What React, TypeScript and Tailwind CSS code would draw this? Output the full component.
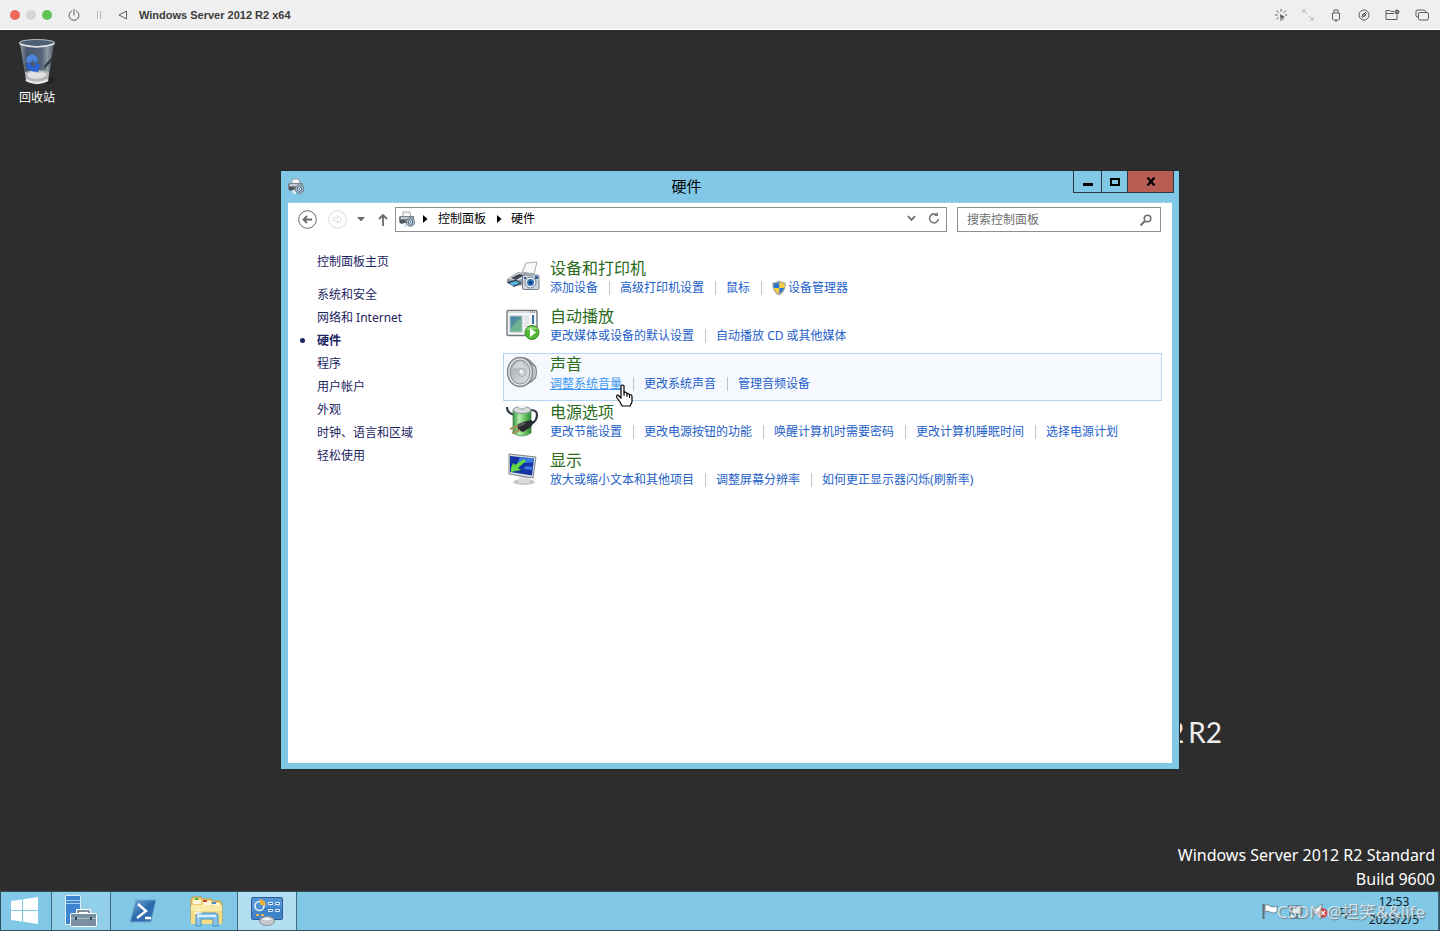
import type { ReactNode } from 'react';

type Category = {
  title: string;
  icon: ReactNode;
  links: { label: string; shield?: boolean }[];
};

function RecycleBinIcon() {
  return (
    <svg width="40" height="48" viewBox="0 0 40 48" aria-hidden="true">
      <defs>
        <linearGradient id="bin" x1="0" x2="1">
          <stop offset="0" stopColor="#8b97a3" />
          <stop offset="0.2" stopColor="#46566a" />
          <stop offset="0.65" stopColor="#56657a" />
          <stop offset="0.8" stopColor="#8f99a3" />
          <stop offset="1" stopColor="#525c66" />
        </linearGradient>
      </defs>
      <ellipse cx="29" cy="42" rx="9" ry="4" fill="#1b1b1b" opacity="0.6" />
      <path d="M3 5 9 43q11 5 22 0L37 5z" fill="url(#bin)" />
      <path d="M8 34q12-4 24 0l-1 9q-11 5-22 0z" fill="#b4b7ba" />
      <path d="m10 36 5-3 5 2 6-1 4 3-5 3-8 1-6-2z" fill="#e2e2e2" />
      <path d="m10 19 5-3 4 2 2 4-3 3-2-3-3 3-4-1z" fill="#4b83e0" />
      <path d="m9 26 4-1 2 4 2-1v6l-6-3zM18 24l5 3-2 7-5-1 2-4z" fill="#2962d6" />
      <path d="m27 28 8-9v4l-8 8z" fill="#313b45" />
      <ellipse cx="20" cy="5" rx="17.500" ry="3.500" fill="#4d6074" stroke="#aeb4b9" strokeWidth="1.200" />
      <path d="M3 6q16 6 34 0" fill="none" stroke="#e4e4e4" strokeWidth="1.500" />
      <path d="M9 42q11 6 22 0" fill="none" stroke="#e6e6e6" strokeWidth="2.500" />
    </svg>
  );
}

function HardwareIcon() {
  return (
    <svg width="16" height="16" viewBox="0 0 16 16" aria-hidden="true">
      <path d="M4 1h7l1 5H4z" fill="#f7f7f7" stroke="#8a8f94" strokeWidth="0.800" />
      <path d="M1 5h14v8H2L0 11V6z" fill="#7b838b" />
      <path d="M2 6h12v2H2z" fill="#c5cbd0" />
      <path d="M1 9h5v3H1z" fill="#4b535b" />
      <path d="M4 12h4v4H5z" fill="#dbe9f4" />
      <circle cx="11.500" cy="11" r="4.300" fill="#aebecb" stroke="#5b6670" strokeWidth="0.800" />
      <circle cx="11.500" cy="11" r="2.300" fill="#eef6fb" stroke="#3c6288" />
      <circle cx="11.500" cy="11" r="0.800" fill="#234c78" />
    </svg>
  );
}

function PrinterIcon() {
  return (
    <svg width="34" height="32" viewBox="0 0 34 32" aria-hidden="true">
      <path d="m20 3 11-1-3 12-12-2z" fill="#fafafa" stroke="#8e949b" strokeWidth="0.800" />
      <path d="m20 4-3 7" stroke="#c8cdd2" />
      <path d="m1 19 11-7 14 2-4 11-14 1-7-3z" fill="#929aa3" />
      <path d="m2 19 10-6 13 2-12 5z" fill="#dde2e7" />
      <path d="m5 18 8-4 6 1-9 5z" fill="#3d4650" />
      <path d="m1 22 9-2 6 3-8 4z" fill="#20384e" />
      <path d="m3 23 7-2 4 2-7 3z" fill="#5bb6dc" />
      <rect x="16.500" y="15" width="16.500" height="14.500" rx="1.500" fill="#cfd6de" stroke="#76808b" />
      <path d="M20 13h8v3h-8z" fill="#a1a9b2" />
      <circle cx="24.500" cy="22.500" r="5.500" fill="#eef2f6" stroke="#6d7885" />
      <circle cx="24.500" cy="22.500" r="3.500" fill="#2d70be" />
      <circle cx="24.500" cy="22.500" r="1.600" fill="#153764" />
      <path d="M29 16h3v3h-3zM18 17h2v2h-2z" fill="#2b5c9d" />
    </svg>
  );
}

function AutoplayIcon() {
  return (
    <svg width="34" height="32" viewBox="0 0 34 32" aria-hidden="true">
      <defs>
        <linearGradient id="photo" x1="0" y1="0" x2="0.500" y2="1">
          <stop offset="0" stopColor="#3f79ab" />
          <stop offset="1" stopColor="#65b084" />
        </linearGradient>
      </defs>
      <rect x="1" y="2.500" width="30" height="25" rx="1.500" fill="#f4f5f6" stroke="#73777b" strokeWidth="1.400" />
      <path d="M2 3h28v2H2z" fill="#dadde0" />
      <path d="M24 4h1m1 0h1m1 0h1" stroke="#555555" />
      <rect x="4" y="8" width="12" height="16" fill="url(#photo)" stroke="#b8c1c9" />
      <path d="M5 21q5-8 10-11v13H5z" fill="#78be92" opacity="0.600" />
      <path d="M18 9h5m-5 3h5m-5 3h5m-5 3h4" stroke="#c4c8cc" />
      <path d="M26 7h2v9h-2z" fill="#3a71a9" />
      <circle cx="26" cy="24.500" r="7" fill="#55b637" stroke="#369221" />
      <path d="M20 22q5-6 12-1-6 1-12 1z" fill="#96d97e" />
      <path d="m24 20 6 4.500-6 4.500z" fill="#ffffff" />
    </svg>
  );
}

function SpeakerIcon() {
  return (
    <svg width="34" height="34" viewBox="0 0 34 34" aria-hidden="true">
      <defs>
        <linearGradient id="cone" x1="0" y1="0" x2="1" y2="1">
          <stop offset="0" stopColor="#9da1a6" />
          <stop offset="0.500" stopColor="#c4c7ca" />
          <stop offset="1" stopColor="#e4e5e7" />
        </linearGradient>
      </defs>
      <path d="M15 1q7 0 11 5l4 4q2 6 0 12l-4 4-9 5z" fill="#85898e" />
      <path d="m25 8 4 3q2 5 0 10l-4 4z" fill="#c1c4c8" />
      <ellipse cx="14" cy="16" rx="12.500" ry="14.500" fill="#e3e4e6" stroke="#85898e" strokeWidth="1.400" />
      <ellipse cx="14" cy="16" rx="10" ry="12" fill="url(#cone)" stroke="#888d92" />
      <path d="M6 13q3-8 10-8l3 7q-6-1-13 1z" fill="#f0f0f1" opacity="0.500" />
      <ellipse cx="16" cy="16.500" rx="3.500" ry="4" fill="#d4d6d9" stroke="#979ba0" strokeWidth="0.700" />
      <ellipse cx="15" cy="15.500" rx="1.500" ry="1.800" fill="#f7f7f8" />
    </svg>
  );
}

function PowerIcon() {
  return (
    <svg width="34" height="34" viewBox="0 0 34 34" aria-hidden="true">
      <defs>
        <linearGradient id="cell" x1="0" x2="1">
          <stop offset="0" stopColor="#36943e" />
          <stop offset="0.350" stopColor="#b4edac" />
          <stop offset="0.700" stopColor="#65bf5c" />
          <stop offset="1" stopColor="#2d8438" />
        </linearGradient>
      </defs>
      <path d="M8 11Q1 9 1 3M25 6q6 0 6 5 0 6-6 9" fill="none" stroke="#343d4b" strokeWidth="2.200" />
      <path d="M7 6v23q9 6 18 0V6z" fill="url(#cell)" stroke="#448047" strokeWidth="0.700" />
      <ellipse cx="16" cy="6" rx="9" ry="3.500" fill="#d6dddb" stroke="#88928e" />
      <path d="M12.500 2h7v3q-4 2-7 0z" fill="#b6bfbc" />
      <ellipse cx="16" cy="2.500" rx="3.500" ry="1.500" fill="#f4f6f5" />
      <path d="m11 21 6-3 8-2 3 2-3 5-8 5-5-2z" fill="#292b2e" />
      <path d="m12 20 6-2 2 2-7 3z" fill="#55585c" />
      <path d="m12 22-8 3m10 1-8 3" stroke="#a98e55" strokeWidth="2" />
    </svg>
  );
}

function DisplayIcon() {
  return (
    <svg width="34" height="34" viewBox="0 0 34 34" aria-hidden="true">
      <ellipse cx="18" cy="30" rx="11" ry="3" fill="#c3c5c8" />
      <path d="m14 23 8 1 2 6q-6 3-12 0z" fill="#d9dbdd" />
      <path d="m3 2 27 3-3 21-24-4z" fill="#dcdfe2" stroke="#7c838a" />
      <path d="m4 4 24 2.500-2 17L4 20z" fill="#1233a0" />
      <path d="m14 5 14 1.500-1 4-16 1zM20 14l7 1-1 3-9-1z" fill="#3b78df" />
      <path d="m5 16 2-5 2 2 9-6 2 2-8 7 3 2-10 2z" fill="#64d747" />
    </svg>
  );
}

function ShieldIcon() {
  return (
    <svg width="14" height="16" viewBox="0 0 15 16" className="mr-0.5" aria-hidden="true">
      <path d="M7.500 0q3 2 7 2 1 10-7 14Q-.5 12 .5 2q4 0 7-2z" fill="#aaa99b" />
      <path d="M7.500 2v6H2q-.5-2 0-5 3 0 5.500-1zM8 8h5q-1 4-5 6z" fill="#2e78cc" />
      <path d="M8 2q2 1 5 1 1 2 0 5H8zM2 8h5.500v6Q3 12 2 8z" fill="#f6cf3d" />
    </svg>
  );
}

function HandCursor() {
  return (
    <svg width="17" height="24" viewBox="0 0 17 24" className="absolute left-[66px] top-2.5 z-10" aria-hidden="true">
      <path
        d="M5 2q0-1 1.500-1T8 2v7l1-1q2 0 2 2 2-1 2.500 1 2.500-1 2.500 2v5l-2 4H6l-2-4-3-4q-1-3 1-3l3 3z"
        fill="#ffffff"
        stroke="#000000"
        strokeWidth="1.200"
        strokeLinejoin="round"
      />
      <path d="M8 9v3m3-2v3m2.500-2v3" stroke="#000000" />
    </svg>
  );
}

const sidebar = ['系统和安全', '网络和 Internet', '硬件', '程序', '用户帐户', '外观', '时钟、语言和区域', '轻松使用'];

const categories: Category[] = [
  {
    title: '设备和打印机',
    icon: <PrinterIcon />,
    links: [{ label: '添加设备' }, { label: '高级打印机设置' }, { label: '鼠标' }, { label: '设备管理器', shield: true }],
  },
  {
    title: '自动播放',
    icon: <AutoplayIcon />,
    links: [{ label: '更改媒体或设备的默认设置' }, { label: '自动播放 CD 或其他媒体' }],
  },
  {
    title: '声音',
    icon: <SpeakerIcon />,
    links: [{ label: '调整系统音量' }, { label: '更改系统声音' }, { label: '管理音频设备' }],
  },
  {
    title: '电源选项',
    icon: <PowerIcon />,
    links: [
      { label: '更改节能设置' },
      { label: '更改电源按钮的功能' },
      { label: '唤醒计算机时需要密码' },
      { label: '更改计算机睡眠时间' },
      { label: '选择电源计划' },
    ],
  },
  {
    title: '显示',
    icon: <DisplayIcon />,
    links: [{ label: '放大或缩小文本和其他项目' }, { label: '调整屏幕分辨率' }, { label: '如何更正显示器闪烁(刷新率)' }],
  },
];

function HostBar() {
  return (
    <header className="flex h-[30px] shrink-0 items-center border-b border-white bg-[#efefef] pl-2.5 pr-[11px] pt-px text-[#5c5c5c]">
      <div className="flex gap-1.5">
        <button aria-label="Close" className="size-2.5 rounded-full bg-[#ee6a5f]" />
        <button aria-label="Minimize" className="size-2.5 rounded-full bg-[#d5d5d5]" />
        <button aria-label="Zoom" className="size-2.5 rounded-full bg-[#5fc454]" />
      </div>
      <button aria-label="Power" className="ml-4">
        <svg width="12" height="12" viewBox="0 0 12 12" fill="none" stroke="currentColor" strokeLinecap="round">
          <path d="M3.500 2a5 5 0 1 0 5 0M6 .5V6" />
        </svg>
      </button>
      <button aria-label="Pause" className="ml-3.5 text-[#b9b9b9]">
        <svg width="10" height="10" viewBox="0 0 10 10" stroke="currentColor">
          <path d="M3.500 1v8M6.500 1v8" />
        </svg>
      </button>
      <button aria-label="Back" className="ml-3.5">
        <svg width="10" height="10" viewBox="0 0 10 10" fill="none" stroke="currentColor" strokeLinejoin="round">
          <path d="M8.500 1v8L1 5z" />
        </svg>
      </button>
      <h1 className="ml-[11px] flex-1 text-[11px] font-bold text-[#3b3b3b] font-['Liberation_Sans',sans-serif]">
        Windows Server 2012 R2 x64
      </h1>
      <div className="flex items-center gap-[15px]">
        <button aria-label="Grab cursor">
          <svg width="12" height="12" viewBox="0 0 12 12" fill="none" stroke="currentColor">
            <path d="M6 0v2.500M6 9.500V12M0 6h2.500M10 6h2M1.500 2l2 1.500M10.500 2l-2 1.500M1.500 10l2-1.500" />
            <path d="m5 5 5 3-2 .5 1 2-1 .5-1-2-1.500 1z" fill="currentColor" stroke="none" />
          </svg>
        </button>
        <button aria-label="Resize" className="text-[#b5b5b5]">
          <svg width="12" height="12" viewBox="0 0 12 12" fill="none" stroke="currentColor">
            <path d="m1 1 4 4M1 4V1h3M7 7l4 4M11 8v3H8" />
          </svg>
        </button>
        <button aria-label="USB" className="flex w-3.5 justify-center">
          <svg width="10" height="13" viewBox="0 0 10 13" fill="none" stroke="currentColor">
            <path d="M3 4V1h4v3M1.500 4h7v6l-1 1h-5l-1-1zM5 11v2" />
          </svg>
        </button>
        <button aria-label="Disc">
          <svg width="12" height="12" viewBox="0 0 12 12" fill="none" stroke="currentColor">
            <circle cx="6" cy="6" r="5" />
            <circle cx="6" cy="6" r="1.500" />
            <path d="m3 8 5-5M4 9l5-5" />
          </svg>
        </button>
        <button aria-label="Shared folder">
          <svg width="15" height="12" viewBox="0 0 15 12" fill="none" stroke="currentColor">
            <path d="M9 2.500H6L5 1.500H1v9h11V6M1 4.500h8" />
            <circle cx="12" cy="3" r="2" fill="currentColor" />
            <path d="M12 2v2" stroke="#efefef" strokeWidth="0.700" />
          </svg>
        </button>
        <button aria-label="Windows">
          <svg width="14" height="12" viewBox="0 0 14 12" fill="none" stroke="currentColor">
            <rect x="3.500" y="3.500" width="10" height="7.500" rx="1.500" />
            <path d="M3.500 8H2L1 7V2l1-1h7.500l1 1v1.500" />
          </svg>
        </button>
      </div>
    </header>
  );
}

function AddressBar() {
  return (
    <div className="flex h-[33px] items-center pl-[10px] pr-[11px] text-[#6b6b6b]">
      <button aria-label="后退">
        <svg width="19" height="19" viewBox="0 0 19 19" fill="none" stroke="#6a6a6a">
          <circle cx="9.500" cy="9.500" r="8.800" />
          <path d="M14 9.500H5.500M9 6 5.500 9.500 9 13" strokeWidth="1.800" />
        </svg>
      </button>
      <button aria-label="前进" className="ml-[11px]">
        <svg width="19" height="19" viewBox="0 0 19 19" fill="none" stroke="#d9d9d9">
          <circle cx="9.500" cy="9.500" r="8.800" />
          <path d="M5 8h4.500V5.500l4.500 4-4.500 4V11H5z" />
        </svg>
      </button>
      <button aria-label="最近的位置" className="ml-2.5">
        <svg width="8" height="5" viewBox="0 0 8 5">
          <path d="M0 0h8L4 4.500z" fill="#6b6b6b" />
        </svg>
      </button>
      <button aria-label="向上" className="ml-3">
        <svg width="12" height="13" viewBox="0 0 12 13" fill="none" stroke="#6b6b6b" strokeWidth="1.800">
          <path d="M6 13V2M2 6l4-4 4 4" />
        </svg>
      </button>
      <nav className="ml-[6px] flex h-[25px] flex-1 items-center border border-[#8f8f8f] bg-white pb-0.5 pl-[3px] pr-1.5 text-[12px] text-black">
        <HardwareIcon />
        <svg width="5" height="8" viewBox="0 0 5 8" className="ml-2" aria-hidden="true">
          <path d="m0 0 4.500 4L0 8z" />
        </svg>
        <a href="#home" className="ml-2.5">控制面板</a>
        <svg width="5" height="8" viewBox="0 0 5 8" className="ml-[11px]" aria-hidden="true">
          <path d="m0 0 4.500 4L0 8z" />
        </svg>
        <a href="#hardware" className="ml-[9px] flex-1">硬件</a>
        <button aria-label="展开">
          <svg width="9" height="7" viewBox="0 0 9 7" fill="none" stroke="#666666" strokeWidth="1.800">
            <path d="m1 1 3.500 4L8 1" />
          </svg>
        </button>
        <button aria-label="刷新" className="ml-3">
          <svg width="12" height="13" viewBox="0 0 12 13" fill="none" stroke="#777777" strokeWidth="1.600">
            <path d="M9.500 3.500A4.500 4.500 0 1 0 10.500 7" />
            <path d="M6 4h4V0z" fill="#777777" stroke="none" />
          </svg>
        </button>
      </nav>
      <label className="ml-2.5 flex h-[25px] w-[204px] items-center border border-[#8f8f8f] bg-white pl-[9px] pr-2">
        <input
          type="search"
          aria-label="搜索控制面板"
          placeholder="搜索控制面板"
          className="min-w-0 flex-1 bg-transparent text-[12px] outline-none placeholder:text-[#6f6f6f]"
        />
        <svg width="12" height="12" viewBox="0 0 12 12" fill="none" stroke="#707070" strokeWidth="1.600" aria-hidden="true">
          <circle cx="7.500" cy="4.500" r="3.300" />
          <path d="m5 7-4.500 4.500" strokeWidth="2" />
        </svg>
      </label>
    </div>
  );
}

function ControlPanelWindow() {
  return (
    <section className="absolute left-[281px] top-[141px] flex h-[598px] w-[898px] flex-col bg-[#81c7e6] px-[7px] pb-[6px] shadow-[0_0_0_1px_#252a2d]">
      <div className="flex h-[31px] shrink-0">
        <div className="pt-[7px]">
          <HardwareIcon />
        </div>
        <h2 className="flex-1 pr-1 text-center text-[15px] leading-[30px] text-black">硬件</h2>
        <div className="-mr-0.5 flex h-[22px] border border-t-0 border-[#2b3a42]">
          <button aria-label="最小化" className="flex w-7 items-center justify-center border-r border-[#2b3a42]">
            <span className="mt-1.5 h-[3px] w-2.5 bg-black" />
          </button>
          <button aria-label="最大化" className="flex w-[26px] items-center justify-center border-r border-[#2b3a42]">
            <span className="h-2 w-2.5 border-2 border-black" />
          </button>
          <button aria-label="关闭" className="flex w-[45px] items-center justify-center bg-[#b75d52]">
            <svg width="10" height="9" viewBox="0 0 10 9" stroke="#000000" strokeWidth="2.200">
              <path d="m1.500.5 7 8M8.500.5l-7 8" />
            </svg>
          </button>
        </div>
      </div>
      <div className="flex-1 border-t border-[#a3cfe2] bg-white">
        <AddressBar />
        <div className="flex">
          <aside className="w-[215px] shrink-0 pl-[29px] pt-3.5 text-[12px] text-[#1b2462]">
            <a href="#home" className="block leading-[23px]">控制面板主页</a>
            <ul className="mt-2.5">
              {sidebar.map((item) => (
                <li key={item} className="relative leading-[23px]">
                  {item === '硬件' && <span className="absolute -left-[17px] top-[9px] size-[5px] rounded-full bg-[#1b2462]" />}
                  <a href="#category" className={item === '硬件' ? 'font-bold' : ''}>{item}</a>
                </li>
              ))}
            </ul>
          </aside>
          <main className="flex-1 pr-2.5 pt-[21px]">
            {categories.map((category) => (
              <article
                key={category.title}
                className={
                  category.title === '声音'
                    ? 'flex h-12 border border-[#b4d3f2] bg-[#f5f9fe] pl-0.5'
                    : 'flex h-12 border border-transparent pl-0.5'
                }
              >
                <div className="w-11 shrink-0 pt-0.5">{category.icon}</div>
                <div>
                  <h3 className="text-[16px] leading-5 text-[#2a6b1c]">
                    <a href="#open">{category.title}</a>
                  </h3>
                  <div className="relative flex items-center text-[12px] leading-5 text-[#2460c8]">
                    {category.links.map((link, i) => (
                      <div key={link.label} className="flex items-center">
                        {i > 0 && <span className="ml-[11px] mr-2.5 h-3.5 w-px bg-[#c4c4c4]" />}
                        {link.shield && <ShieldIcon />}
                        <a href="#task" className={link.label === '调整系统音量' ? 'text-[#3d96f2] underline' : ''}>
                          {link.label}
                        </a>
                      </div>
                    ))}
                    {category.title === '声音' && <HandCursor />}
                  </div>
                </div>
              </article>
            ))}
          </main>
        </div>
      </div>
    </section>
  );
}

function Taskbar() {
  return (
    <footer className="flex h-10 shrink-0 border border-[#34515e] bg-[#81c7e6]">
      <button aria-label="开始" className="flex w-[50px] items-center justify-center pr-1">
        <svg width="28" height="28" viewBox="0 0 28 28" fill="#ffffff" aria-hidden="true">
          <path d="m1 4 11-1.500V13H1zM13 2.300 28 0v13H13zM1 14h11v10.500L1 23zM13 14h15v13l-15-2.300z" />
        </svg>
      </button>
      <button aria-label="服务器管理器" className="flex w-[60px] items-center justify-center border-x border-[#3d6b80] bg-[#92d0ea]">
        <svg width="34" height="34" viewBox="0 0 34 34" aria-hidden="true">
          <path d="M1.500 1.500h15v29h-15z" fill="#3e85d1" stroke="#d9eefa" />
          <path d="M2 6.500h14M2 9.500h14" stroke="#a9d0f0" />
          <path d="M14 20v-3h11v3" fill="none" stroke="#ffffff" strokeWidth="4" />
          <rect x="6.500" y="19.500" width="26" height="13" rx="1" fill="#78909f" stroke="#ffffff" />
          <path d="M14 19v-2h11v2" fill="none" stroke="#566f80" strokeWidth="1.500" />
          <path d="M7 24.500h25" stroke="#a9bac5" />
          <path d="M12 23v3M27 23v3" stroke="#33495a" strokeWidth="2" />
        </svg>
      </button>
      <button aria-label="PowerShell" className="flex w-[63px] items-center justify-center">
        <svg width="28" height="26" viewBox="0 0 28 26" aria-hidden="true">
          <defs>
            <linearGradient id="shell" x1="0" x2="1" y1="0" y2="1">
              <stop offset="0" stopColor="#73b0de" />
              <stop offset="0.500" stopColor="#2b69ab" />
              <stop offset="1" stopColor="#397dbd" />
            </linearGradient>
          </defs>
          <path d="M7 2h20l-5 22H1z" fill="url(#shell)" stroke="#74a7cd" strokeLinejoin="round" />
          <path d="m9 6 8 7-9 7M16 20h6" fill="none" stroke="#ffffff" strokeWidth="2.400" />
        </svg>
      </button>
      <button aria-label="文件资源管理器" className="flex w-[63px] items-center justify-center">
        <svg width="34" height="32" viewBox="0 0 34 32" aria-hidden="true">
          <path d="M2 4 4 2h8l2 2h8l2 2h7l2 3v18H2z" fill="#edcd6b" stroke="#c4993f" />
          <path d="M4 5h8v4H4z" fill="#fff7dc" />
          <path d="M6 3h3v2H6z" fill="#42b448" />
          <path d="M14 6h8v4h-8z" fill="#fff7dc" />
          <path d="M14 5h4v2h-4z" fill="#cc4936" />
          <path d="M23 8h8v4h-8z" fill="#fff7dc" />
          <path d="M23 7h4v2h-4z" fill="#4589cf" />
          <path d="M2 10h31v19H2z" fill="#f3dc85" />
          <path d="M2 10h31v6H2z" fill="#f9eaa9" />
          <path d="M7 31V20l2-2h18l2 2v11h-5v-7H12v7z" fill="#8ac5e8" stroke="#4d94c2" />
          <path d="M9 21h18" stroke="#d5effc" strokeWidth="2" />
          <path d="M9 14v9M5 18h8" stroke="#ffffff" />
        </svg>
      </button>
      <button aria-label="控制面板" className="flex w-[60px] items-center justify-center border-x border-[#3d6b80] bg-[#b2def0]">
        <svg width="34" height="30" viewBox="0 0 34 30" aria-hidden="true">
          <rect x="1.500" y="1.500" width="31" height="22" rx="1" fill="#3f83c8" stroke="#2f5d99" />
          <path d="M2 2h30v9Q16 9 2 16z" fill="#69a6dc" opacity="0.500" />
          <circle cx="9.500" cy="10" r="4.500" fill="none" stroke="#e1f1fb" strokeWidth="1.600" />
          <path d="M10 9V3q5 1 6 6z" fill="#f4aa38" />
          <path d="M18.500 6.500h4v2h-4zM25.500 6.500h4v2h-4zM18.500 13.500h4v2h-4zM25.500 13.500h4v2h-4z" fill="#2f69a6" stroke="#dceffa" />
          <path d="M6 18h3v2H6zM11 18h3v2h-3z" fill="#f4b04a" />
          <ellipse cx="17" cy="25" rx="7.500" ry="4.500" fill="#c3c8cc" stroke="#8c9297" />
          <path d="M12 24q5-5 10 0z" fill="#f3f4f5" />
        </svg>
      </button>
      <div className="relative ml-auto flex items-center">
        <div className="flex w-[100px] items-center gap-2.5">
          <svg width="16" height="16" viewBox="0 0 16 16" aria-hidden="true">
            <path d="M1.500 1v15" stroke="#606d75" strokeWidth="2" />
            <path d="M3 2q3-1 5 1t7 0v6q-4 2-7 0T3 9z" fill="#ffffff" stroke="#66747c" strokeWidth="0.800" />
          </svg>
          <svg width="15" height="15" viewBox="0 0 15 15" fill="none" stroke="#45545d" aria-hidden="true">
            <path d="M4 2h10v8H4zM6 14h7M9 10v4M1 1v4h2V1M2 5v9h4" fill="#e4eef3" />
          </svg>
          <svg width="16" height="16" viewBox="0 0 16 16" aria-hidden="true">
            <path d="M1 5h3l5-4v14l-5-4H1z" fill="#ffffff" stroke="#66747c" strokeWidth="0.800" />
            <circle cx="10" cy="10" r="4.700" fill="#d94343" />
            <path d="m8 8 4 4m0-4-4 4" stroke="#ffffff" strokeWidth="1.400" />
          </svg>
          <span className="text-[14px] text-[#22333d]">中</span>
        </div>
        <time className="w-[64px] text-center text-[12px] leading-[18px] text-[#101c22]">
          12:53
          <br />
          2023/2/5
        </time>
        <span className="ml-3 h-full w-px bg-[#3d6b80]" />
        <span className="absolute right-3.5 top-2 whitespace-nowrap text-[17px] leading-6 text-[#e8eff3]/80 [text-shadow:1px_1px_1px_#6a7e89]">
          CSDN @坦笑&amp;&amp;life
        </span>
      </div>
    </footer>
  );
}

export default function App() {
  return (
    <div className="flex h-screen flex-col overflow-hidden bg-[#2d2d2d] font-['Noto_Sans','Noto_Sans_CJK_SC',sans-serif]">
      <HostBar />
      <div className="relative min-h-0 flex-1 text-white">
        <a href="#recycle" className="absolute left-[17px] top-2 flex flex-col items-center text-[12px]">
          <RecycleBinIcon />
          <span className="mt-[3px] leading-[18px]">回收站</span>
        </a>
        <p className="absolute right-[218px] top-[680px] flex gap-1 whitespace-nowrap text-[28px] leading-[44px] text-[#eeeeee] font-['Lato',sans-serif]">
          <span>Windows Server 2012</span>
          <span>R2</span>
        </p>
        <p className="absolute bottom-0 right-[5px] text-right text-[16px] leading-6">
          Windows Server 2012 R2 Standard
          <br />
          Build 9600
        </p>
        <ControlPanelWindow />
      </div>
      <Taskbar />
    </div>
  );
}
